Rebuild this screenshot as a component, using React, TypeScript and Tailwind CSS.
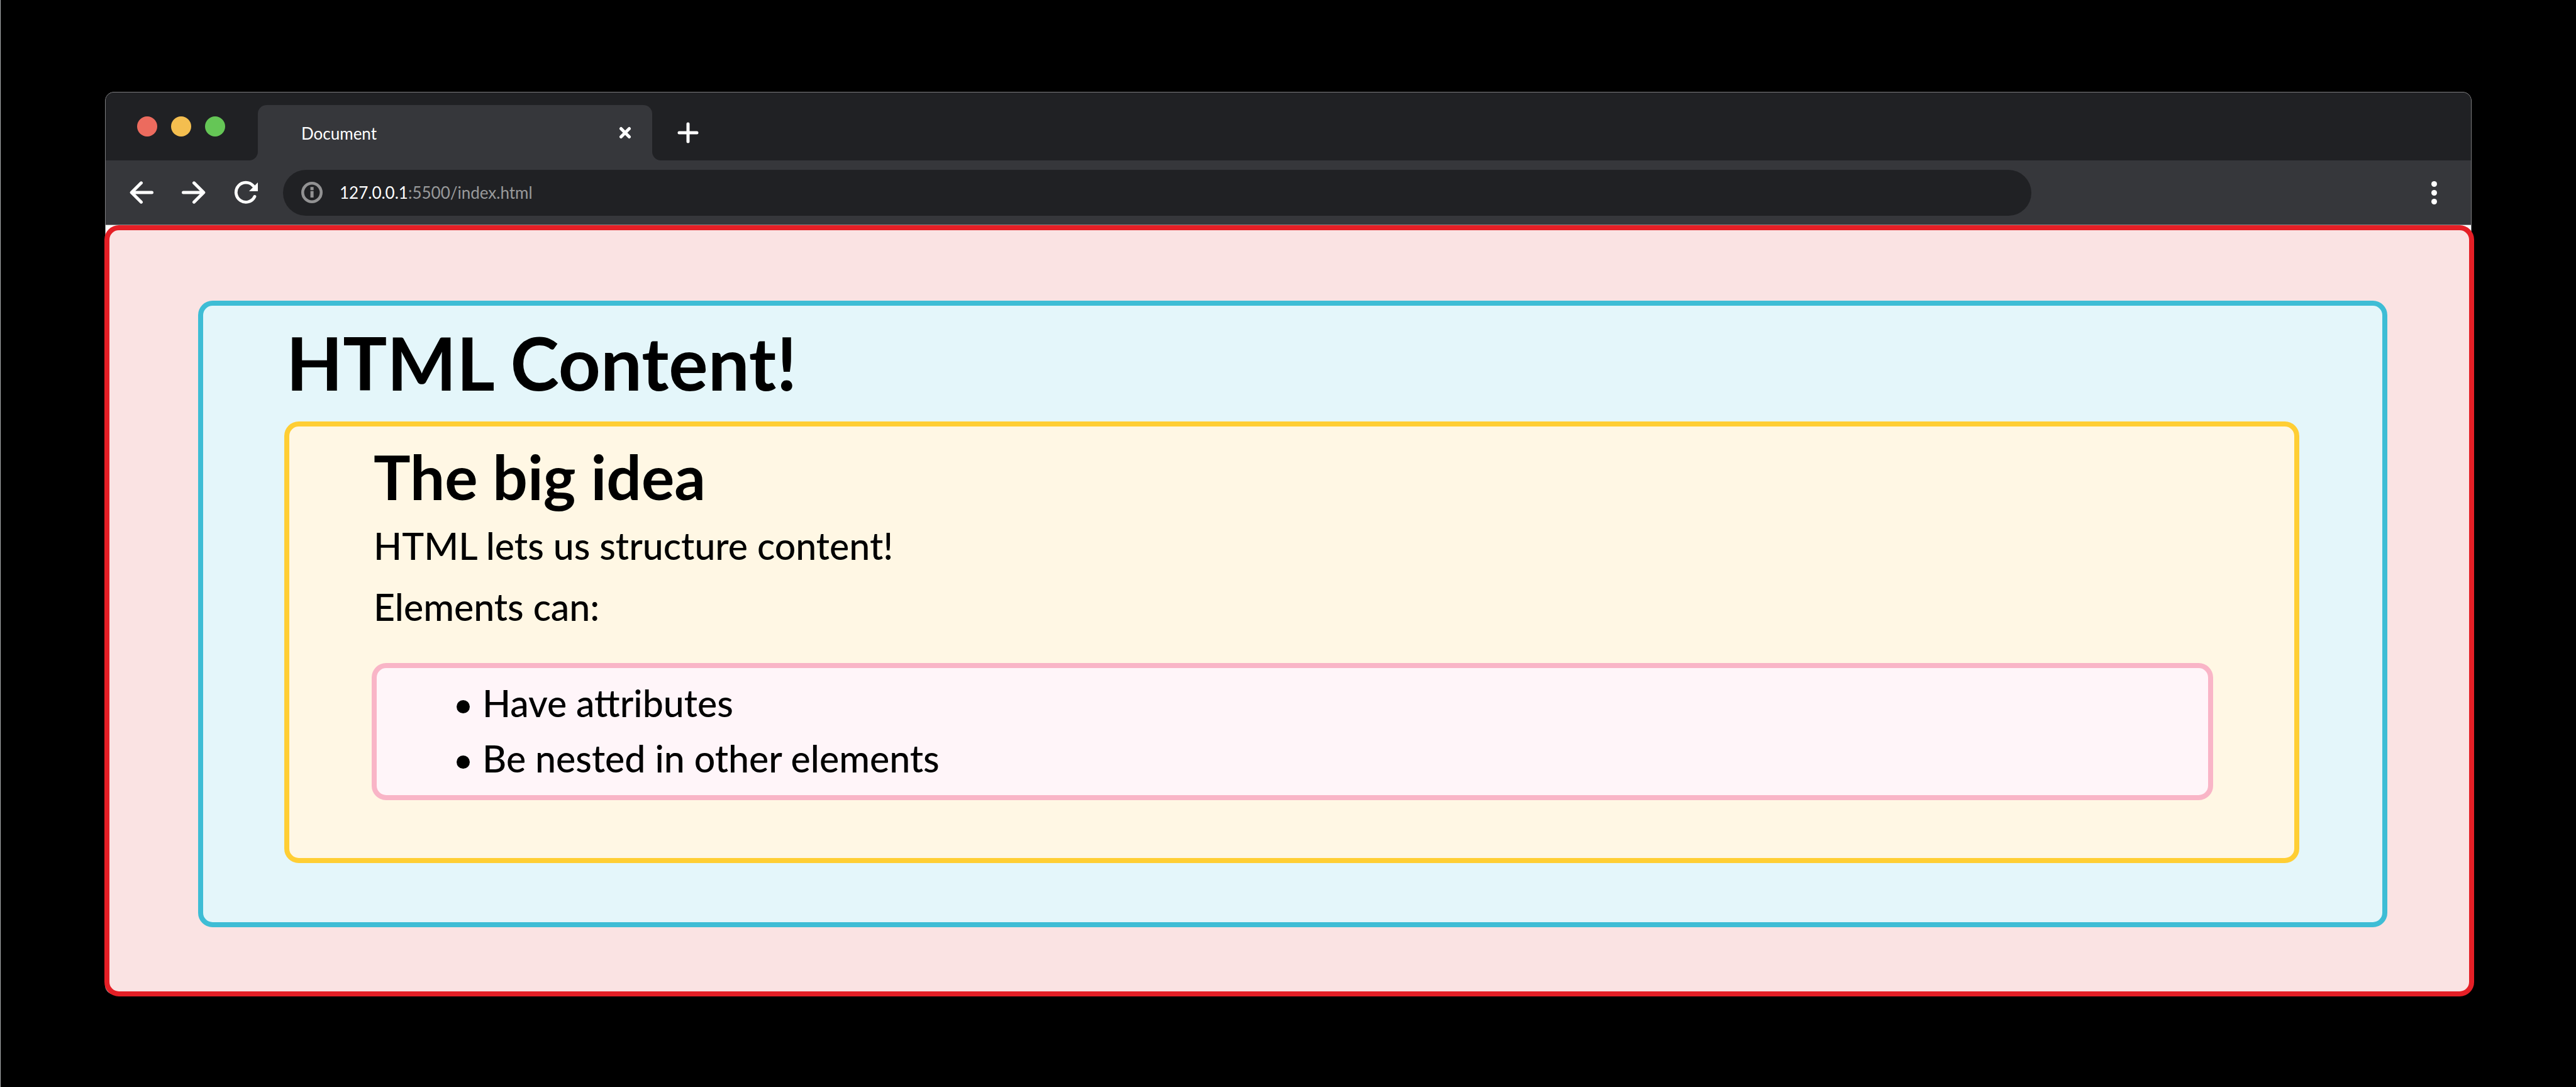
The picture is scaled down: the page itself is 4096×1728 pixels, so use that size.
const lights = ["bg-[#ec6b5e]", "bg-[#f4be4f]", "bg-[#65c656]"];

const bullets = ["Have attributes", "Be nested in other elements"];

function TabStrip() {
  return (
    <div className="flex h-[108px] bg-[#36373b]">
      <div className="flex w-[242px] items-center gap-[22px] rounded-br-[14px] bg-[#202124] pl-[50px]">
        {lights.map((color) => (
          <span key={color} className={`size-8 rounded-full ${color}`} />
        ))}
      </div>
      <div className="bg-[#202124] pt-5" role="tablist">
        <div
          role="tab"
          aria-selected="true"
          className="flex h-full w-[627px] items-center justify-between rounded-t-[14px] bg-[#36373b] pr-[33px] pl-[69px]"
        >
          <span className="pt-0.5 text-[26px] leading-8 text-white">Document</span>
          <button type="button" aria-label="Close tab">
            <svg className="size-5" viewBox="0 0 20 20" stroke="#fff" strokeWidth="5" strokeLinecap="round">
              <path d="M3.5 3.5l13 13M16.5 3.5l-13 13" />
            </svg>
          </button>
        </div>
      </div>
      <div className="flex flex-1 items-center rounded-bl-[14px] bg-[#202124] pt-5 pl-10">
        <button type="button" aria-label="New tab">
          <svg className="size-[34px]" viewBox="0 0 34 34" stroke="#fff" strokeWidth="5" strokeLinecap="round">
            <path d="M17 3v28M3 17h28" />
          </svg>
        </button>
      </div>
    </div>
  );
}

function Toolbar() {
  return (
    <div className="flex h-[103px] items-center border-b border-[#8a8a8c] bg-[#36373b] pr-[54px] pl-[38px]">
      <div className="flex items-center gap-[45px]">
        <button type="button" aria-label="Back">
          <svg className="size-[38px]" viewBox="0 0 38 38" fill="none" stroke="#fff" strokeWidth="5" strokeLinecap="round">
            <path d="M35.5 19H4M18.5 3.8L3.2 19l15.3 15.2" strokeLinejoin="round" />
          </svg>
        </button>
        <button type="button" aria-label="Forward">
          <svg className="size-[38px]" viewBox="0 0 38 38" fill="none" stroke="#fff" strokeWidth="5" strokeLinecap="round">
            <path d="M2.5 19H34M19.5 3.8L34.8 19 19.5 34.2" strokeLinejoin="round" />
          </svg>
        </button>
        <button type="button" aria-label="Reload">
          <svg className="size-[38px]" viewBox="0 0 38 38" fill="none">
            <path d="M33 25.4A15.6 15.6 0 1 1 30.6 8.4" stroke="#fff" strokeWidth="4.8" strokeLinecap="round" />
            <path d="M38 3v14H24z" fill="#fff" />
          </svg>
        </button>
      </div>
      <div className="mr-[636px] ml-10 flex h-[73px] flex-1 items-center gap-[27px] rounded-full bg-[#202124] pl-[29px]">
        <svg className="size-[34px]" viewBox="0 0 34 34" fill="none">
          <circle cx="17" cy="17" r="14.7" stroke="#929293" strokeWidth="4.6" />
          <path d="M14.6 8.3h5v5h-5zM14.6 14.8h5v10.2h-5z" fill="#929293" />
        </svg>
        <div
          role="textbox"
          aria-label="Address"
          contentEditable
          suppressContentEditableWarning
          className="flex-1 text-[26px] leading-8 text-[#999a9b] outline-none"
        >
          <span className="text-white">127.0.0.1</span>:5500/index.html
        </div>
      </div>
      <button type="button" aria-label="Menu" className="flex flex-col gap-[5px]">
        <span className="size-[9px] rounded-full bg-white" />
        <span className="size-[9px] rounded-full bg-white" />
        <span className="size-[9px] rounded-full bg-white" />
      </button>
    </div>
  );
}

function Page() {
  return (
    <div className="-mr-[5px] -mb-1 -ml-0.5 rounded-[23px] border-8 border-[#e51f26] bg-[#fae3e3] pt-28 pr-[130px] pb-[102px] pl-[141px]">
      <main className="rounded-[23px] border-8 border-[#3ebdd5] bg-[#e4f6fa] pt-5 pr-[132px] pb-[94px] pl-[129px]">
        <h1 className="pl-[3px] text-[117px] leading-[140px] font-bold">HTML Content!</h1>
        <section className="mt-6 rounded-[23px] border-8 border-[#ffce34] bg-[#fff7e4] pt-[22px] pr-[129px] pb-[92px] pl-[131px]">
          <div className="pl-[3px] text-[59px] leading-[70px] font-medium">
            <h2 className="text-[98px] leading-[115px] font-bold">The big idea</h2>
            <p className="mt-[18px]">HTML lets us structure content!</p>
            <p className="mt-[27px]">Elements can:</p>
          </div>
          <ul className="mt-[54px] rounded-[23px] border-8 border-[#f9b5c7] bg-[#fff5f9] pt-3 pb-[14px] pl-[127px] text-[59px] leading-[88px] font-medium">
            {bullets.map((text) => (
              <li key={text} className="flex items-center gap-5">
                <span className="mt-[11px] size-[21px] rounded-full bg-black" />
                {text}
              </li>
            ))}
          </ul>
        </section>
      </main>
    </div>
  );
}

export default function App() {
  return (
    <div className="min-h-screen border-l border-[#b0b3b5] bg-black pt-[146px] pr-[166px] pl-[166px] font-[Lato,'Open_Sans',sans-serif] text-black">
      <div className="rounded-[14px] border border-[#7c7c7e] bg-white">
        <div className="overflow-hidden rounded-t-[13px]">
          <TabStrip />
          <Toolbar />
        </div>
        <Page />
      </div>
    </div>
  );
}
